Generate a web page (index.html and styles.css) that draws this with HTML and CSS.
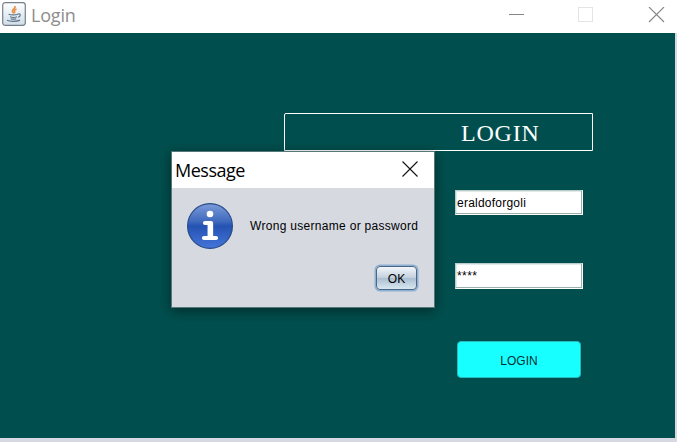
FILE: index.html
```
<!DOCTYPE html>
<html lang="en">
<head>
<meta charset="utf-8">
<title>Login</title>
<link rel="stylesheet" href="styles.css">
</head>
<body>
<div class="window">
  <header class="titlebar">
    <svg class="app-icon" width="24" height="24" viewBox="0 0 24 24">
      <defs><linearGradient id="tile" x1="0" y1="0" x2="0" y2="1"><stop offset="0" stop-color="#fff"/><stop offset="1" stop-color="#cfdde8"/></linearGradient></defs>
      <rect x=".7" y=".7" width="22.6" height="22.6" rx="2.5" fill="url(#tile)" stroke="#75808c" stroke-width="1.2"/>
      <path d="M13 4c1 2.500-3.500 3.500-2.500 5.500l1.300 1.800M14.500 7c-2.500 1-2.500 2.200-1.500 4" fill="none" stroke="#eb9148" stroke-width="1.700"/>
      <path d="M6.500 12.300c2 .8 7.500.8 9.500 0M8 14.800c2 .7 5.500.7 7 0M8.600 16.700c1.800.6 4 .6 5.700 0M16 12c3-.8 3 2.500.1 3.300M5 18.300c3 1.400 10 1.300 13-.2" fill="none" stroke="#60758c" stroke-width="1.200"/>
    </svg>
    <h1 class="window-title">Login</h1>
    <svg class="controls" width="156" height="16" viewBox="0 0 156 16">
      <path d="M0 7.500h15" stroke="#858585"/>
      <rect x="69.500" y=".5" width="14" height="14" fill="none" stroke="#e4e4e4"/>
      <path d="M140 0l15 15M155 0l-15 15" stroke="#858585" stroke-width="1.100"/>
    </svg>
  </header>
  <main class="content">
    <div class="heading"><span>LOGIN</span></div>
    <input class="field username" type="text" value="eraldoforgoli" aria-label="Username">
    <div class="field password">****</div>
    <button class="login">LOGIN</button>
  </main>
</div>
<section class="dialog" role="dialog">
  <header class="dialog-bar">
    <h2 class="dialog-title">Message</h2>
    <svg width="16" height="16" viewBox="0 0 16 16"><path d="M.5.500l15 15M15.500.500l-15 15" stroke="#111" stroke-width="1.100"/></svg>
  </header>
  <div class="message">
    <svg width="46" height="46" viewBox="0 0 46 46">
      <defs>
        <linearGradient id="ball" x1="0" y1="0" x2="0" y2="1"><stop offset="0" stop-color="#7c9cd9"/><stop offset=".4" stop-color="#3f69bd"/><stop offset=".5" stop-color="#2453b3"/><stop offset="1" stop-color="#4675da"/></linearGradient>
      </defs>
      <circle cx="23" cy="23" r="22.400" fill="url(#ball)" stroke="#294b8a" stroke-width="1.200"/>
      <circle cx="23" cy="11" r="3.300" fill="#fff"/>
      <path d="M18 20h6v15M17 35h12" fill="none" stroke="#fff" stroke-width="4.200" stroke-linecap="round" stroke-linejoin="round"/>
      <path d="M23.300 19.500v15" stroke="#fff" stroke-width="5.500"/>
    </svg>
    <span class="message-text">Wrong username or password</span>
  </div>
  <button class="ok">OK</button>
</section>
</body>
</html>
```
FILE: styles.css
```
* { box-sizing: border-box; }
body {
  margin: 0;
  width: 677px;
  height: 442px;
  overflow: hidden;
  background: #d6d9e2;
  font-family: "Liberation Sans", Arial, sans-serif;
  font-size: 12px;
  color: #000;
}
.window { height: 442px; }
.titlebar {
  display: flex;
  height: 33px;
  padding: 2px 12px 0 2px;
  background: #fff;
}
.window-title, .dialog-title {
  margin: 0;
  font: 400 18px/24px "Open Sans", sans-serif;
}
.window-title { margin: 1px 0 0 5px; color: #8d8d8d; letter-spacing: -.2px; }
.controls { margin: 5px 0 0 auto; }
.content {
  display: flex;
  flex-direction: column;
  width: 675px;
  height: 405px;
  padding: 80px 0 0 284px;
  background: #004f4e;
}
.heading {
  width: 309px;
  height: 38px;
  padding-left: 176px;
  border: 1px solid #fff;
  border-radius: 2px 0 0 0;
  color: #fff;
  font: 24px/38px "Liberation Serif", serif;
  letter-spacing: .8px;
}
.field {
  width: 128px;
  height: 25px;
  margin-left: 171px;
  padding: 0 1px;
  border: 1px solid #b9cccc;
  border-right-color: #fff;
  border-bottom-color: #fff;
  border-radius: 0;
  background: #fff;
  box-shadow: inset -1px -1px #9cafaf, inset 1px 1px #e3eaea;
  font: 12px/24px "Liberation Sans", sans-serif;
  letter-spacing: .23px;
}
.username { margin-top: 39px; padding-top: 0; }
.password { height: 26px; margin-top: 48px; letter-spacing: .4px; }
.login {
  width: 124px;
  height: 37px;
  margin: 52px 0 0 173px;
  padding: 2px 0 0;
  border: 1px solid #27b9bb;
  border-radius: 4px;
  background: #17ffff;
  color: #002f35;
  font: 12px "Liberation Sans", sans-serif;
}
.dialog {
  position: absolute;
  left: 171px;
  top: 151px;
  display: flex;
  flex-direction: column;
  width: 264px;
  height: 157px;
  border: 1px solid #587779;
  background: #d6d9e0;
  box-shadow: 0 3px 12px rgba(0, 0, 0, .45);
}
.dialog-bar {
  display: flex;
  justify-content: space-between;
  height: 36px;
  padding: 9px 16px 0 3px;
  background: #fff;
}
.dialog-title { margin-top: -3px; letter-spacing: -.5px; }
.message {
  display: flex;
  align-items: center;
  gap: 17px;
  padding: 15px 0 0 15px;
}
.message-text { white-space: nowrap; letter-spacing: .3px; }
.ok {
  width: 41px;
  height: 24px;
  margin: 17px 0 0 204px;
  padding: 1px 0 0;
  border: 1px solid #4a6688;
  border-radius: 4px;
  background: linear-gradient(#f2f6fa, #c3d1de 48%, #aabfd1 52%, #d9e8f2);
  box-shadow: 0 0 0 1.5px #8db0d1;
  font: 12px "Liberation Sans", sans-serif;
}
```
